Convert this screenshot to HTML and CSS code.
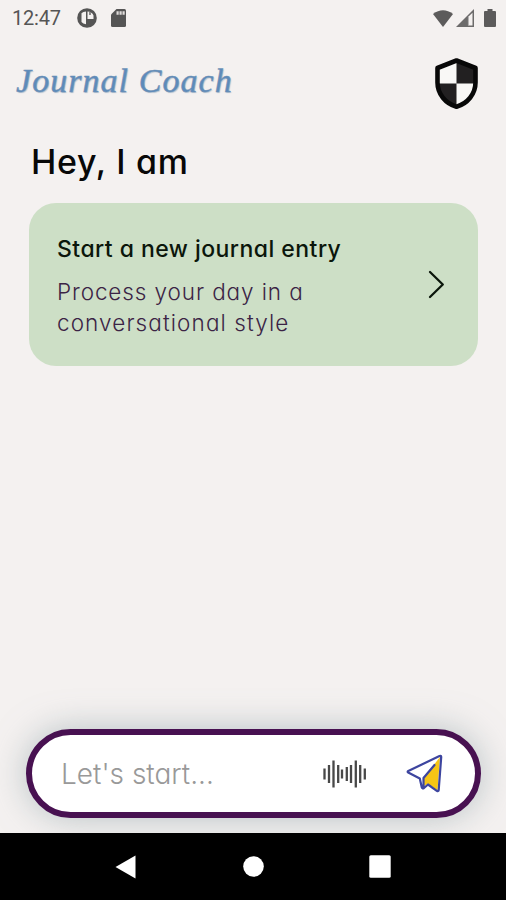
FILE: index.html
```html
<!DOCTYPE html>
<html lang="en">
<head>
    <meta charset="UTF-8">
    <meta name="viewport" content="width=device-width, initial-scale=1.0">
    <title>Journal Coach</title>
    <link rel="stylesheet" href="styles.css">
</head>
<body>
    <div class="status-bar">
        <span class="time">12:47</span>
        <svg class="app-icon" width="20" height="20" viewBox="0 0 20 20">
            <circle cx="10" cy="10" r="9.8" fill="#555"/>
            <path d="M4.5 5.2 Q6 3.4 9 3.4 V16.3 Q6 16 4.5 14Z M10.5 3.5 Q15 3.8 16.5 7.5 V11 H10.5Z" fill="#f4f1f0"/>
            <path d="M12 4h2v3h-2z" fill="#888"/>
        </svg>
        <svg class="sd-icon" width="16" height="18" viewBox="0 0 16 18">
            <path d="M5.5 0H13.5Q15 0 15 1.5V16.5Q15 18 13.5 18H1.5Q0 18 0 16.5V5.5Z" fill="#555"/>
            <path d="M5.5 2.3h2.2v3.4H5.5zM8.5 2.3h2.2v3.4H8.5zM11.5 2.3h2.2v3.4h-2.2z" fill="#dedbda"/>
        </svg>
        <div class="status-right">
            <svg width="20" height="17" viewBox="0 0 20 17">
                <path d="M0 4Q10 -3.5 20 4L10 17Z" fill="#5c5b5b"/>
            </svg>
            <svg width="18" height="18" viewBox="0 0 18 18">
                <path d="M0 18L18 0V18Z" fill="#6c6b6b"/>
                <path d="M12 8L16.5 3.7V16.5H12Z" fill="#f4f1f0"/>
                <path d="M11.5 8h1v8.5h-1z" fill="#777"/>
            </svg>
            <svg class="battery" width="12" height="18" viewBox="0 0 12 18">
                <path d="M3.5 0h5v2H11Q12 2 12 3V17Q12 18 11 18H1Q0 18 0 17V3Q0 2 1 2H3.5Z" fill="#5c5b5b"/>
            </svg>
        </div>
    </div>

    <header class="header">
        <div class="logo">Journal Coach</div>
        <svg class="shield" width="43" height="51" viewBox="0 0 43 51">
            <path d="M21.5 2L40.7 10V24.5C40.7 36 32.5 46 21.5 49C10.5 46 2.3 36 2.3 24.5V10Z" fill="#f9f8f6"/>
            <path d="M21.5 2L40.7 10V25.5H21.5Z M2.3 25.5H21.5V49C10.5 46 2.3 36 2.3 25.5Z" fill="#222021"/>
            <path d="M21.5 2.5L40.5 10V24.5C40.5 36 32.5 45.5 21.5 48.7C10.5 45.5 2.5 36 2.5 24.5V10Z" fill="none" stroke="#080808" stroke-width="4.6" stroke-linejoin="round"/>
        </svg>
    </header>

    <main class="main">
        <h1 class="greeting">Hey, I am</h1>
        <div class="card">
            <div class="card-text">
                <h2>Start a new journal entry</h2>
                <p><span class="line-one">Process your day in a</span><br>conversational style</p>
            </div>
            <svg class="chevron" width="17" height="29" viewBox="0 0 17 29">
                <path d="M2 2L14.8 14.5L2 27" fill="none" stroke="#0b160b" stroke-width="2.3" stroke-linecap="round" stroke-linejoin="round"/>
            </svg>
        </div>
    </main>

    <div class="composer-area">
        <div class="composer">
            <span class="placeholder">Let's start...</span>
            <svg class="wave" width="44" height="28" viewBox="0 0 44 28">
                <path d="M1.5 8.5V19.5M6 5V23M10.5 .5V27.5M15.2 5V23M19 9.5V18.5M23.8 7V21M28 5V23M32.8 .5V27.5M37.2 5V23M41.8 8.5V19.5" stroke="#484848" stroke-width="2.3"/>
            </svg>
            <svg class="send" width="37" height="39" viewBox="0 0 37 39">
                <path d="M34 3L17.5 24V32.5L22 29.5L31.5 36.5Z" fill="#f6c515"/>
                <path d="M2.2 18.5Q1 17.8 2.3 17L33.5 2Q35.3 1.2 35.2 3.2L32.7 36Q32.4 37.8 30.8 36.8L22 30.5L18 34Q16.3 35 15.8 33.5L13.8 24.5Z M17.5 32.5V24L28.5 11" fill="none" stroke="#3d459f" stroke-width="2.2" stroke-linecap="round" stroke-linejoin="round"/>
            </svg>
        </div>
    </div>

    <nav class="nav-bar">
        <svg width="21" height="24" viewBox="0 0 21 24"><path d="M.5 12L20.5 .5V23.5Z" fill="#fff"/></svg>
        <svg width="22" height="21" viewBox="0 0 22 21"><circle cx="11.5" cy="10.5" r="10.3" fill="#fff"/></svg>
        <svg width="22" height="23" viewBox="0 0 22 23"><rect x=".3" y=".3" width="21.4" height="22.4" rx="1.5" fill="#fff"/></svg>
    </nav>
</body>
</html>
```
FILE: styles.css
```css
* { box-sizing: border-box; }
body {
    margin: 0;
    height: 900px;
    display: flex;
    flex-direction: column;
    overflow: hidden;
    background: #f4f1f0;
    font-family: Inter, "Open Sans", sans-serif;
    font-feature-settings: "cv11";
}
h1, h2, p { margin: 0; white-space: nowrap; }
svg { display: block; flex: none; }

.status-bar { display: flex; align-items: center; height: 36px; padding: 0 10px 0 12px; }
.time { width: 65px; font: 20px Roboto, sans-serif; letter-spacing: -0.2px; color: #555; }
.sd-icon { margin-left: 14px; }
.status-right { display: flex; align-items: center; gap: 3px; margin-left: auto; }
.battery { margin-left: 7px; }

.header { display: flex; justify-content: space-between; height: 88px; padding: 22px 28px 0 16px; }
.logo {
    font: italic 34px/46px "Liberation Serif", serif;
    letter-spacing: 1.05px;
    color: #5d8bbb;
    -webkit-text-stroke: 0.5px #6f91b4;
    text-shadow: 1px 1px 1px #b3c0cf;
}

.main { padding: 14px 28px 0 29px; }
.greeting { padding-left: 2px; font-size: 34px; font-weight: 500; line-height: 48px; letter-spacing: 0.7px; color: #080808; }
.card {
    display: flex;
    align-items: center;
    justify-content: space-between;
    height: 163px;
    margin-top: 17px;
    padding: 0 33px 0 28px;
    border-radius: 27px;
    background: #cddfc6;
}
.card-text { padding-top: 2px; }
.card h2 { font-size: 23px; font-weight: 500; line-height: 32px; letter-spacing: 0.46px; color: #0b160b; }
.card p { margin-top: 11px; font-size: 22.5px; font-weight: 300; line-height: 31px; letter-spacing: 1.1px; color: #3b2445; }
.line-one { letter-spacing: 0.9px; }

.composer-area { margin-top: auto; padding: 0 25px 15px 26px; }
.composer {
    display: flex;
    align-items: center;
    height: 89px;
    padding: 0 32px 0 29px;
    border: 6px solid #481151;
    border-radius: 45px;
    background: #fff;
    box-shadow: 0 0 34px rgba(135, 155, 160, 0.55);
}
.placeholder { font-size: 28px; font-weight: 300; color: #999; }
.wave { margin-left: auto; }
.send { margin-left: 39px; }

.nav-bar {
    display: flex;
    align-items: center;
    justify-content: space-between;
    height: 67px;
    padding: 0 115px;
    background: #000;
}
```
